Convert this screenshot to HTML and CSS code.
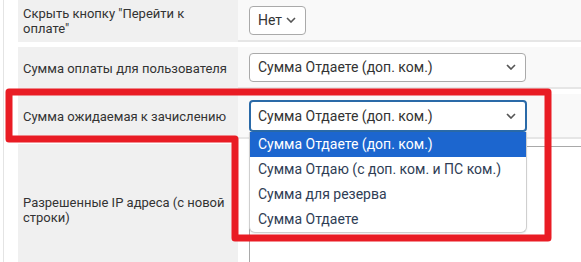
FILE: index.html
```html
<!DOCTYPE html>
<html lang="ru">
<head>
    <meta charset="UTF-8">
    <title>Настройки оплаты</title>
    <link rel="stylesheet" href="styles.css">
</head>
<body>
    <div class="panel">
        <div class="form">
            <!-- скрыть кнопку -->
            <div class="row">
                <div class="label">Скрыть кнопку "Перейти к оплате"</div>
                <div class="value">
                    <div class="select select-short">
                        <span>Нет</span>
                        <svg class="chevron" width="10" height="6" viewBox="0 0 10 6"><path d="M1 1 L5 5 L9 1" /></svg>
                    </div>
                </div>
            </div>

            <!-- сумма оплаты -->
            <div class="row">
                <div class="label">Сумма оплаты для пользователя</div>
                <div class="value">
                    <div class="select">
                        <span>Сумма Отдаете (доп. ком.)</span>
                        <svg class="chevron" width="10" height="6" viewBox="0 0 10 6"><path d="M1 1 L5 5 L9 1" /></svg>
                    </div>
                </div>
            </div>

            <!-- сумма к зачислению (открытый список) -->
            <div class="row row-open">
                <div class="label">Сумма ожидаемая к зачислению</div>
                <div class="value">
                    <div class="select-wrap">
                        <div class="select focused">
                            <span>Сумма Отдаете (доп. ком.)</span>
                            <svg class="chevron" width="10" height="6" viewBox="0 0 10 6"><path d="M1 1 L5 5 L9 1" /></svg>
                        </div>
                        <ul class="dropdown">
                            <li class="active">Сумма Отдаете (доп. ком.)</li>
                            <li>Сумма Отдаю (с доп. ком. и ПС ком.)</li>
                            <li>Сумма для резерва</li>
                            <li>Сумма Отдаете</li>
                        </ul>
                    </div>
                </div>
            </div>

            <!-- IP адреса -->
            <div class="row row-tall">
                <div class="label label-low">Разрешенные IP адреса (с новой строки)</div>
                <div class="value value-top">
                    <div class="textarea"></div>
                </div>
            </div>
        </div>
    </div>

    <!-- красная пометка -->
    <svg class="mark" width="581" height="262" viewBox="0 0 581 262">
        <path d="M9 92 H548 V238 H235 V139 H9 Z" />
    </svg>
</body>
</html>
```

FILE: styles.css
```css
body {
    margin: 0;
    background: #fff;
    font-family: Roboto, "Noto Sans", sans-serif;
    color: #333;
    overflow: hidden;
    height: 262px;
    position: relative;
}

.panel {
    margin-left: 3px;
    border-left: 1px solid #e4e4e4;
    padding-left: 14px;
    height: 262px;
    overflow: hidden;
}

.form {
    display: flex;
    flex-direction: column;
    gap: 5px;
}

.row {
    display: grid;
    grid-template-columns: 220px 1fr;
    height: 42px;
}

.row-open {
    height: 45px;
}

.row-tall {
    height: 118px;
}

.label {
    background: #f0f0f0;
    padding: 0 10px 0 5px;
    font-size: 13px;
    line-height: 15px;
    display: flex;
    align-items: center;
}

.label-low {
    padding-top: 14px;
}

.value {
    background: #f9f9f9;
    border-bottom: 2px solid #e6e6e6;
    padding: 0 11px;
    display: flex;
    align-items: center;
}

.value-top {
    align-items: flex-start;
    padding-top: 2px;
    padding-right: 0;
    background: #fff;
    border-bottom: none;
    overflow: hidden;
}

/* селекты */
.select {
    width: 277px;
    height: 29px;
    box-sizing: border-box;
    border: 1px solid #aaa;
    border-radius: 4px;
    background: #fff;
    padding: 0 9px 0 8px;
    display: flex;
    align-items: center;
    justify-content: space-between;
    font-size: 14px;
    color: #333;
}

.select-short {
    width: 57px;
}

.select.focused {
    height: 32px;
    width: 278px;
    border: 2px solid #2a6aa8;
    padding-left: 7px;
}

.chevron path {
    fill: none;
    stroke: #555;
    stroke-width: 1.6;
}

.select-wrap {
    position: relative;
}

.dropdown {
    position: absolute;
    top: 100%;
    left: 0;
    width: 278px;
    box-sizing: border-box;
    margin: 0;
    padding: 0;
    list-style: none;
    background: #fff;
    border: 1px solid #cfcfcf;
    border-top: none;
    border-radius: 0 0 6px 6px;
    box-shadow: 0 1px 2px rgba(0, 0, 0, 0.08);
    z-index: 5;
    font-size: 14px;
    color: #2f3d55;
}

.dropdown li {
    height: 25px;
    line-height: 25px;
    padding-left: 8px;
    white-space: nowrap;
}

.dropdown li.active {
    background: #1c66cf;
    color: #fff;
}

.textarea {
    flex-shrink: 0;
    width: 400px;
    height: 140px;
    border: 1px solid #a9a9a9;
    background: #fff;
}

/* пометка поверх */
.mark {
    position: absolute;
    top: 0;
    left: 0;
    pointer-events: none;
    z-index: 10;
}

.mark path {
    fill: none;
    stroke: #e91c24;
    stroke-width: 7;
    stroke-linejoin: round;
}
```
